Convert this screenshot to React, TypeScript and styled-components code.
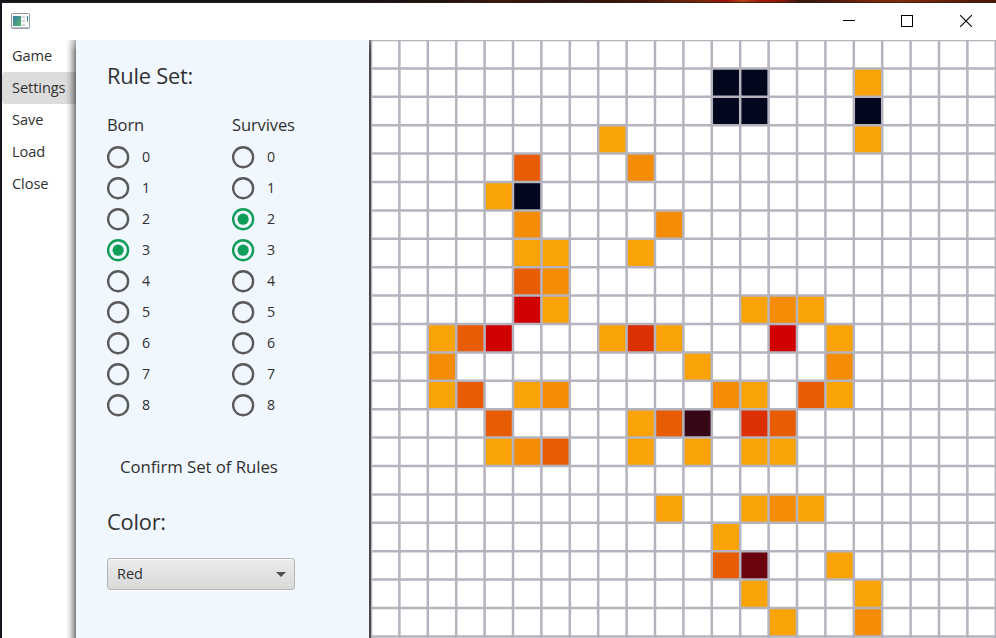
import React, { useState } from "react";
import styled, { createGlobalStyle } from "styled-components";

const Global = createGlobalStyle`
  * { box-sizing: border-box; }
  body { margin: 0; overflow: hidden; background: #fff; }
  button { font: inherit; color: inherit; border: 0; background: none; padding: 0; text-align: left; }
`;

const Desktop = styled.div`
  width: 996px;
  height: 638px;
  padding: 3px 0 0 2px;
  overflow: hidden;
  color: #303030;
  font-family: "Open Sans", "Noto Sans", sans-serif;
  background:
    linear-gradient(rgba(30, 24, 30, 0) 2px, rgba(40, 32, 24, 0.75) 2px) 0 0 / 100% 3px no-repeat,
    linear-gradient(90deg, #15131c 0, #17131a 350px, #21120f 440px, #3b160c 500px, #2a120f 560px,
      #401409 640px, #7c2808 705px, #98100a 725px, #b44413 742px, #9b1c08 760px, #8e1604 780px,
      #38160f 800px, #4b190d 830px, #702407 860px, #842c0c 900px, #6b2007 940px, #4a1705 996px) 0 0 / 100% 3px no-repeat,
    #15131c;
`;

const Window = styled.div`
  display: flex;
  flex-direction: column;
  height: 635px;
  background: #fff;
`;

const TitleBar = styled.header`
  display: flex;
  flex: 0 0 37px;
  justify-content: space-between;
  padding: 0 1px 0 9px;

  > svg { margin-top: 10px; }
`;

const Controls = styled.div`
  display: flex;
`;

const ControlButton = styled.button`
  display: flex;
  justify-content: center;
  width: 58.5px;
  padding-top: 12px;
`;

const Body = styled.div`
  display: flex;
  flex: 1;
  min-height: 0;
`;

const Menu = styled.nav`
  position: relative;
  display: flex;
  flex: 0 0 74px;
  flex-direction: column;
  background: #fff;

  /* shadow cast by the settings drawer */
  &::after {
    content: "";
    position: absolute;
    inset: 0 0 0 auto;
    width: 10px;
    background: linear-gradient(90deg, rgba(0, 0, 0, 0), rgba(0, 0, 0, 0.1) 35%, rgba(0, 0, 0, 0.3) 70%, rgba(0, 0, 0, 0.52));
    mask-image: linear-gradient(rgba(0, 0, 0, 0.6), #000 12px);
    pointer-events: none;
  }
`;

const MenuItem = styled.button<{ $active?: boolean }>`
  height: 32px;
  padding: 0 0 2px 10px;
  border-radius: 3px;
  font-size: 14.6px;
  letter-spacing: -0.08px;
  line-height: 30px;
  background: ${(p) => (p.$active ? "#dcdcdc" : "transparent")};
`;

const Panel = styled.section`
  flex: 0 0 293px;
  padding: 22px 31px 0;
  background: #f0f7ff;
`;

const Heading = styled.h2`
  margin: 0;
  height: 28px;
  font-size: 21.8px;
  letter-spacing: -0.2px;
  font-weight: 400;
  line-height: 28px;
`;

const RuleColumns = styled.div`
  display: grid;
  grid-template-columns: 125px 1fr;
  margin-top: 22px;
`;

const RuleTitle = styled.div`
  height: 29px;
  font-size: 16.5px;
  letter-spacing: -0.1px;
  line-height: 26px;
`;

const RadioRow = styled.button`
  display: flex;
  align-items: center;
  gap: 12px;
  height: 31px;
  width: 60px;
  font-size: 14.2px;
`;

const RadioMark = styled.svg`
  flex: none;
  margin-top: 1px;
`;

const Confirm = styled.button`
  display: block;
  height: 30px;
  margin: 32px 0 26px 13px;
  font-size: 16.8px;
  letter-spacing: -0.06px;
  line-height: 30px;
  white-space: nowrap;
`;

const ColorSelect = styled.button`
  display: flex;
  align-items: center;
  justify-content: space-between;
  width: 188px;
  height: 32px;
  margin-top: 22px;
  padding: 0 8px 0 9px;
  border: 1px solid #b5b5b5;
  border-radius: 3px;
  font-size: 14.5px;
  line-height: 28px;
  background: linear-gradient(#ebebeb, #d9d9d9);
  box-shadow: inset 0 1px #f7f7f7, 0 1px #f8fbff;
`;

const Edge = styled.div`
  flex: 0 0 2px;
  background: linear-gradient(#777, #484848 12px);
`;

const Board = styled.svg`
  display: block;
  flex: 0 0 625px;
  height: 598px;
  background: #fff;
`;

const CELL = 28.4;
const COLUMNS = 22;
const ROWS = 21;

const HEAT: Record<string, string> = {
  A: "#faa307",
  B: "#f48c06",
  D: "#e85d04",
  C: "#dc2f02",
  R: "#d00000",
  N: "#6a040f",
  M: "#370617",
  K: "#03071e",
};

const GENERATION = [
  "......................",
  "............KK...A....",
  "............KK...K....",
  "........A........A....",
  ".....D...B............",
  "....AK................",
  ".....B....B...........",
  ".....AA..A............",
  ".....DB...............",
  ".....RA......ABA......",
  "..ADR...ACA...R.A.....",
  "..B........A....B.....",
  "..AD.AB.....BA.DA.....",
  "....D....ADM.CD.......",
  "....ABD..A.A.AA.......",
  "......................",
  "..........A..ABA......",
  "............A.........",
  "............DN..A.....",
  ".............A...A....",
  "..............A..B....",
  "......................",
];

function LifeBoard() {
  const lines = (count: number) => Array.from({ length: count + 1 }, (_, i) => i * CELL);
  return (
    <Board viewBox="0 0 625 598">
      {GENERATION.flatMap((row, y) =>
        [...row].map((state, x) =>
          state === "." ? null : (
            <rect key={`${x}-${y}`} x={x * CELL} y={y * CELL} width={CELL} height={CELL} fill={HEAT[state]} />
          ),
        ),
      )}
      <g stroke="#b4b3be" strokeWidth="2.5">
        {lines(COLUMNS).map((x) => <line key={`v${x}`} x1={x} x2={x} y1="0" y2="598" />)}
        {lines(ROWS).map((y) => <line key={`h${y}`} x1="0" x2="625" y1={y} y2={y} />)}
      </g>
    </Board>
  );
}

function AppIcon() {
  return (
    <svg width="19" height="16" viewBox="0 0 19 16">
      <defs>
        <linearGradient id="pane" x1="0" y1="0" x2="1" y2="1">
          <stop offset="0" stopColor="#3b78a8" />
          <stop offset="1" stopColor="#56b868" />
        </linearGradient>
      </defs>
      <rect x=".5" y=".5" width="18" height="15" rx=".8" fill="#f7f8fa" stroke="#949ba5" />
      <path d="M1 14.5h17" stroke="#bcc2ca" />
      <rect x="2" y="3" width="8" height="10" fill="url(#pane)" />
      <path d="M11 4h3M11 8h3M11 12h3" stroke="#d3d6d9" strokeWidth="2" />
      <rect x="16" y="3" width="1" height="6" fill="#397a9d" />
      <rect x="16" y="7" width="1" height="2" fill="#55b37a" />
    </svg>
  );
}

function Radio({ on }: { on: boolean }) {
  return (
    <RadioMark width="23" height="23" viewBox="0 0 23 23">
      <circle cx="11.1" cy="11.2" r="10" fill="none" stroke={on ? "#0f9d58" : "#5a5a5a"} strokeWidth="2.4" />
      {on && <circle cx="11.1" cy="11.2" r="5.6" fill="#0f9d58" />}
    </RadioMark>
  );
}

const NEIGHBOURS = [0, 1, 2, 3, 4, 5, 6, 7, 8];

function RuleGroup({ title, initial }: { title: string; initial: number[] }) {
  const [selected, setSelected] = useState(initial);
  const toggle = (n: number) =>
    setSelected((s) => (s.includes(n) ? s.filter((v) => v !== n) : [...s, n]));
  return (
    <div>
      <RuleTitle>{title}</RuleTitle>
      {NEIGHBOURS.map((n) => (
        <RadioRow key={n} onClick={() => toggle(n)}>
          <Radio on={selected.includes(n)} />
          {n}
        </RadioRow>
      ))}
    </div>
  );
}

export default function App() {
  return (
    <>
      <Global />
      <Desktop>
        <Window>
          <TitleBar>
            <AppIcon />
            <Controls>
              <ControlButton aria-label="Minimize">
                <svg width="12" height="12" shapeRendering="crispEdges"><path d="M0 5.5h12" stroke="#000" /></svg>
              </ControlButton>
              <ControlButton aria-label="Maximize">
                <svg width="12" height="12"><rect x=".5" y=".5" width="11" height="11" fill="none" stroke="#000" /></svg>
              </ControlButton>
              <ControlButton aria-label="Close">
                <svg width="12" height="12"><path d="M0 0L12 12M12 0L0 12" stroke="#000" strokeWidth="1.1" /></svg>
              </ControlButton>
            </Controls>
          </TitleBar>
          <Body>
            <Menu>
              {["Game", "Settings", "Save", "Load", "Close"].map((label) => (
                <MenuItem key={label} $active={label === "Settings"}>{label}</MenuItem>
              ))}
            </Menu>
            <Panel>
              <Heading>Rule Set:</Heading>
              <RuleColumns>
                <RuleGroup title="Born" initial={[3]} />
                <RuleGroup title="Survives" initial={[2, 3]} />
              </RuleColumns>
              <Confirm>Confirm Set of Rules</Confirm>
              <Heading>Color:</Heading>
              <ColorSelect>
                <span>Red</span>
                <svg width="10" height="5"><path d="M0 0h10L5 5z" fill="#505050" /></svg>
              </ColorSelect>
            </Panel>
            <Edge />
            <LifeBoard />
          </Body>
        </Window>
      </Desktop>
    </>
  );
}
